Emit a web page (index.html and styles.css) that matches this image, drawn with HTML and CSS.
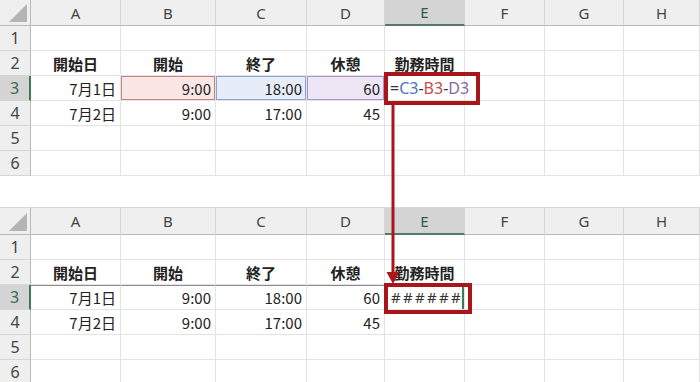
FILE: index.html
```html
<!DOCTYPE html>
<html lang="ja">
  <head>
    <meta charset="UTF-8" />
    <title>勤務時間</title>
    <link rel="stylesheet" href="styles.css">
  </head>
  <body>
    <div class="page">
      <!-- before: formula being typed in E3 -->
      <div class="sheet">
        <div class="corner"><svg width="18" height="18" viewBox="0 0 18 18"><polygon points="18,0 18,18 0,18" fill="#b4b4b4"/></svg></div>
        <div class="col">A</div><div class="col">B</div><div class="col">C</div><div class="col">D</div>
        <div class="col sel">E</div><div class="col">F</div><div class="col">G</div><div class="col">H</div>

        <div class="rh">1</div>
        <div class="c"></div><div class="c"></div><div class="c"></div><div class="c"></div><div class="c"></div><div class="c"></div><div class="c"></div><div class="c"></div>

        <div class="rh">2</div>
        <div class="c m">開始日</div><div class="c m">開始</div><div class="c m">終了</div><div class="c m">休憩</div><div class="c m">勤務時間</div>
        <div class="c"></div><div class="c"></div><div class="c"></div>

        <div class="rh sel">3</div>
        <div class="c r">7月1日</div>
        <div class="c r ref ref-b">9:00</div>
        <div class="c r ref ref-c">18:00</div>
        <div class="c r ref ref-d">60</div>
        <div class="c edit"><span class="formula">=<span class="t-c">C3</span>-<span class="t-b">B3</span>-<span class="t-d">D3</span></span><span class="caret"></span></div>
        <div class="c"></div><div class="c"></div><div class="c"></div>

        <div class="rh">4</div>
        <div class="c r">7月2日</div><div class="c r">9:00</div><div class="c r">17:00</div><div class="c r">45</div>
        <div class="c"></div><div class="c"></div><div class="c"></div><div class="c"></div>

        <div class="rh">5</div>
        <div class="c"></div><div class="c"></div><div class="c"></div><div class="c"></div><div class="c"></div><div class="c"></div><div class="c"></div><div class="c"></div>

        <div class="rh">6</div>
        <div class="c"></div><div class="c"></div><div class="c"></div><div class="c"></div><div class="c"></div><div class="c"></div><div class="c"></div><div class="c"></div>
      </div>

      <!-- after: result too wide for the column -->
      <div class="sheet lower">
        <div class="corner"><svg width="18" height="18" viewBox="0 0 18 18"><polygon points="18,0 18,18 0,18" fill="#b4b4b4"/></svg></div>
        <div class="col">A</div><div class="col">B</div><div class="col">C</div><div class="col">D</div>
        <div class="col sel">E</div><div class="col">F</div><div class="col">G</div><div class="col">H</div>

        <div class="rh">1</div>
        <div class="c"></div><div class="c"></div><div class="c"></div><div class="c"></div><div class="c"></div><div class="c"></div><div class="c"></div><div class="c"></div>

        <div class="rh">2</div>
        <div class="c m">開始日</div><div class="c m">開始</div><div class="c m">終了</div><div class="c m">休憩</div><div class="c m">勤務時間</div>
        <div class="c"></div><div class="c"></div><div class="c"></div>

        <div class="rh sel">3</div>
        <div class="c r top-line">7月1日</div>
        <div class="c r top-line">9:00</div>
        <div class="c r top-line">18:00</div>
        <div class="c r top-line">60</div>
        <div class="c active"><span class="hashes">######</span></div>
        <div class="c"></div><div class="c"></div><div class="c"></div>

        <div class="rh">4</div>
        <div class="c r">7月2日</div><div class="c r">9:00</div><div class="c r">17:00</div><div class="c r">45</div>
        <div class="c"></div><div class="c"></div><div class="c"></div><div class="c"></div>

        <div class="rh">5</div>
        <div class="c"></div><div class="c"></div><div class="c"></div><div class="c"></div><div class="c"></div><div class="c"></div><div class="c"></div><div class="c"></div>

        <div class="rh">6</div>
        <div class="c"></div><div class="c"></div><div class="c"></div><div class="c"></div><div class="c"></div><div class="c"></div><div class="c"></div><div class="c"></div>
      </div>

      <!-- red callouts and the arrow between them -->
      <div class="mark mark-top"></div>
      <div class="mark mark-bottom"></div>
      <svg class="arrow" width="16" height="190" viewBox="0 0 16 190">
        <line x1="8" y1="4" x2="8" y2="174" stroke="#a8161c" stroke-width="3" />
        <polygon points="1.5,171 14.5,171 8,183" fill="#a8161c" />
      </svg>
    </div>
  </body>
</html>
```

FILE: styles.css
```css
body {
  margin: 0;
  background: #fff;
  font-family: "Noto Sans CJK JP", "Noto Sans", sans-serif;
  color: #222;
  overflow: hidden;
}

.page {
  position: relative;
  width: 700px;
  height: 382px;
  overflow: hidden;
}

.sheet {
  display: grid;
  grid-template-columns: 31px 90px 95px 91px 78px 80px 80px 79px 76px;
  grid-template-rows: 26px;
  grid-auto-rows: 25px;
}

.sheet.lower {
  margin-top: 31px;
  grid-template-rows: 28px;
}

.corner,
.col {
  background: #efefef;
  border-right: 1px solid #d6d6d6;
  border-bottom: 1px solid #b9b9b9;
  box-sizing: border-box;
}

.lower .corner,
.lower .col {
  border-top: 1px solid #d9d9d9;
}

.corner {
  display: flex;
  align-items: flex-end;
  justify-content: flex-end;
  padding: 0 3px 3px 0;
  border-right-color: #b9b9b9;
}

.col {
  display: flex;
  align-items: center;
  justify-content: center;
  font-family: "Noto Sans", sans-serif;
  font-size: 15px;
  color: #444;
}

.col.sel {
  background: #d4d4d4;
  color: #2f5a45;
  border-bottom: 2px solid #537a64;
}

.rh {
  background: #efefef;
  border-right: 1px solid #b9b9b9;
  border-bottom: 1px solid #d6d6d6;
  box-sizing: border-box;
  display: flex;
  align-items: center;
  justify-content: center;
  font-family: "Noto Sans", sans-serif;
  font-size: 16px;
  color: #444;
}

.rh.sel {
  background: #d4d4d4;
  color: #3b6a52;
  border-right: 2px solid #3f7a58;
}

.c {
  border-right: 1px solid #e3e3e3;
  border-bottom: 1px solid #e3e3e3;
  box-sizing: border-box;
  display: flex;
  align-items: center;
  padding: 0 4px;
  font-size: 15px;
  white-space: nowrap;
  min-width: 0;
}

.c.r {
  justify-content: flex-end;
}

.c.m {
  justify-content: center;
  font-weight: bold;
}

/* formula reference highlights */
.ref-b {
  background: #fbe6e6;
  box-shadow: inset 0 0 0 1px #c98482;
}

.ref-c {
  background: #e6edf9;
  box-shadow: inset 0 0 0 1px #8aa6d6;
}

.ref-d {
  background: #eee6f5;
  box-shadow: inset 0 0 0 1px #a793c9;
}

.edit {
  overflow: visible;
  padding-left: 5px;
}

.formula {
  font-family: "Noto Sans", sans-serif;
  font-size: 16px;
  color: #333;
}

.t-c { color: #4f74bd; }
.t-b { color: #be4f4c; }
.t-d { color: #7f69a8; }

.caret {
  display: inline-block;
  width: 1px;
  height: 13px;
  margin-left: 1px;
  background: #8c86aa;
}

.top-line {
  border-top: 1px solid #8d8d8d;
}

.active {
  padding-left: 6px;
  box-shadow: inset -2px 0 0 #3f7a58;
}

.hashes {
  font-family: "Noto Sans", sans-serif;
  font-size: 15px;
  letter-spacing: 2.3px;
  color: #333;
}

.mark {
  position: absolute;
  border: 4px solid #a8161c;
  box-sizing: border-box;
}

.mark-top {
  left: 384px;
  top: 72px;
  width: 96px;
  height: 33px;
}

.mark-bottom {
  left: 384px;
  top: 283px;
  width: 88px;
  height: 31px;
}

.arrow {
  position: absolute;
  left: 385px;
  top: 101px;
}
```
